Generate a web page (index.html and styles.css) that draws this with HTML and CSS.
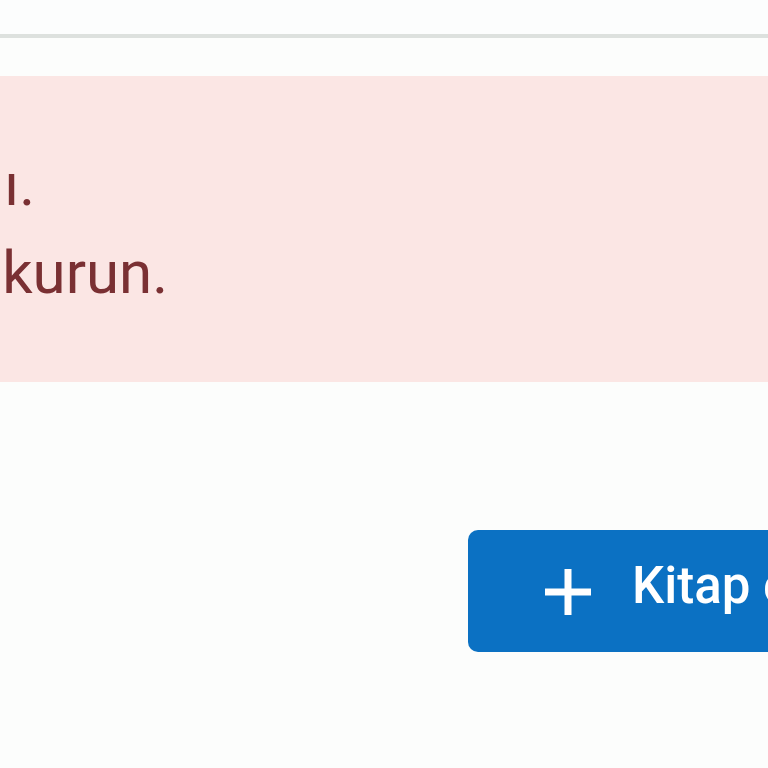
FILE: index.html
```html
<!DOCTYPE html>
<html lang="tr">
<head>
<meta charset="utf-8">
<title>Kitaplar</title>
<link rel="stylesheet" href="styles.css">
</head>
<body>
<div class="page">
  <header class="topbar"></header>
  <div class="alert" role="alert">
    <div class="line line-1"><span>Veritabanı yapılandırması eksik veya hatalı.</span></div>
    <div class="line line-2"><span>Lütfen kurulum sihirbazını çalıştırarak veritabanını yeniden kurun.</span></div>
  </div>
  <div class="actions">
    <button class="btn-primary" type="button">
      <svg class="plus" width="46" height="46" viewBox="0 0 46 46" aria-hidden="true">
        <path d="M23 3v40M3 23h40" stroke="#ffffff" stroke-width="7" stroke-linecap="square" fill="none"/>
      </svg>
      <span class="btn-label">Kitap ekle</span>
    </button>
  </div>
</div>
</body>
</html>
```
FILE: styles.css
```css
html, body {
  margin: 0;
  padding: 0;
  background: #fcfdfc;
}

.page {
  width: 768px;
  height: 768px;
  overflow: hidden;
  font-family: Roboto, "Liberation Sans", Arial, sans-serif;
}

.topbar {
  height: 34px;
  border-bottom: 4px solid #dde1de;
  background: #fcfdfd;
}

.alert {
  margin-top: 38px;
  padding: 65px 0;
  background: #fbe6e4;
  color: #7a3033;
  font-size: 60px;
  line-height: 88px;
}

.line {
  display: flex;
  justify-content: flex-end;
  white-space: nowrap;
}

.line-1 { width: 35px; }
.line-2 { width: 168px; }

.actions {
  display: flex;
  padding-left: 468px;
  margin-top: 148px;
}

.btn-primary {
  display: inline-flex;
  align-items: center;
  gap: 41px;
  flex: none;
  height: 122px;
  padding: 0 60px 0 77px;
  border: 0;
  border-radius: 10px;
  background: #0b71c3;
  color: #ffffff;
  font-family: Roboto, "Liberation Sans", Arial, sans-serif;
  font-weight: 500;
  font-size: 51px;
  white-space: nowrap;
}

.plus {
  flex: none;
  margin-top: 2px;
}

.btn-label {
  margin-bottom: 12px;
}
```
